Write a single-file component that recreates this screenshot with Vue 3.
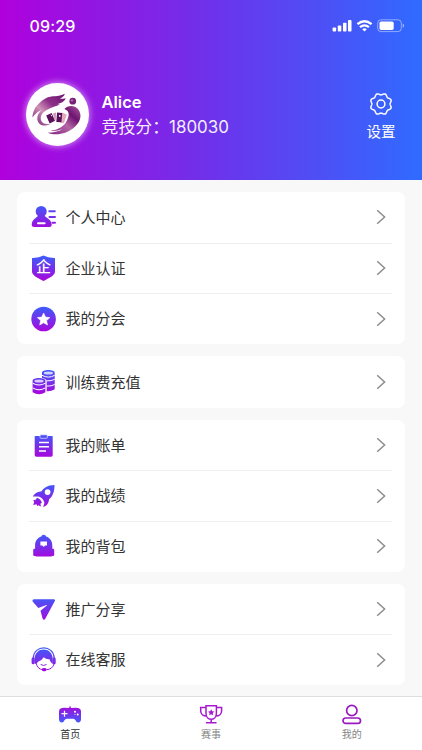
<script setup>
// Each icon is drawn on a 26x26 grid and inherits the vertical gradient fill.
const icons = {
  person: `<circle cx="10.2" cy="7.400" r="5.500"/><path d="M7 11h6.500c0 3 6.800 3 7.200 9.500q0 2.500-2.500 2.500H3.200Q.7 23 .7 20.500C1.200 14 7 14 7 11z"/><path d="M17.500 6.300h6.300a1 1 0 0 1 0 2h-6.300zM18.500 12h5.500a1 1 0 0 1 0 2h-5.500a1 1 0 0 1 0-2zM21.500 17.700h2.500a1 1 0 0 1 0 2h-2.500a1 1 0 0 1 0-2z"/><rect x="6" y="18.300" width="8.600" height="2" rx="1" fill="#fff"/>`,
  shield: `<path d="M12.500 .6Q17 3.200 24 3v13.500c0 4-6 6.500-11.500 9.500C7 23 1 20.500 1 16.500V3Q8 3.200 12.500 .6z"/>`,
  star: `<circle cx="12.600" cy="13" r="12.300"/><path fill="#fff" stroke="#fff" stroke-width=".6" stroke-linejoin="round" d="M12.600 7l1.900 4.100 4.400.5-3.300 3 .9 4.400-3.900-2.200-3.900 2.200.9-4.400-3.300-3 4.400-.5z"/>`,
  coins: `<path d="M11 3.800C11 .2 23.700 .2 23.700 3.800v16.400q-3.300 2.300-8 2V11.300q-1.500-1.800-4.700-2.300z"/><ellipse cx="17.400" cy="4" rx="4.600" ry="1.500" fill="#fff" fill-opacity=".75"/><path d="M11 6.300q6.400 3.600 12.700 0M15.700 11.900q4.700.2 8-1.600M15.700 17.100q4.700.2 8-1.600" fill="none" stroke="#fff" stroke-width="1"/><path d="M1.600 11.800c0-3.600 12.800-3.600 12.800 0v11.400q-6.400 3.900-12.800 0z"/><ellipse cx="8" cy="12" rx="4.600" ry="1.500" fill="#fff" fill-opacity=".75"/><path d="M1.600 14.200q6.400 3.600 12.800 0M1.600 18.900q6.400 3.800 12.800 0" fill="none" stroke="#fff" stroke-width="1"/>`,
  clipboard: `<path d="M4 4h5v1.500h7.300V4H21q.7 0 .7.700V23q0 1.700-1.700 1.700H5.400q-1.700 0-1.700-1.700V4.700Q3.700 4 4 4z"/><rect x="9" y="2.800" width="7.300" height="3.500" rx=".8" stroke="#fff" stroke-width=".6"/><path d="M8 10.500h10M8 14.800h10M8 19h7" stroke="#fff" stroke-width="1.400"/>`,
  rocket: `<path fill-rule="evenodd" d="M23.500 2C16 2 13 5 10.200 8.600 6.500 8.300 3.500 10.500 1.800 13.600l5.300-.2c3.300.6 5.900 3.300 6.300 6.500l-1.200 4.200c4-1.500 5.600-4.500 5.800-7.700C22 13 23.500 8.500 23.500 2zM16.600 6.200a2.900 2.900 0 1 1 0 5.800 2.900 2.900 0 0 1 0-5.800z"/><path d="M6 14.800q3.700 1.200 4.900 4.900l-1.500 1 .6 2.900-2.700-1.400-1.200.9-.5-1.900-3.400.7 1-3-1-1.700 2.500-.5z"/>`,
  bag: `<path d="M10.300 3.600Q10.600 1.800 12.700 1.800t2.400 1.800C19.500 5 21.300 8.500 21.300 12.500V22q0 1.500-1.500 1.500H5.600q-1.500 0-1.500-1.500v-9.500C4.100 8.500 6 5 10.300 3.600z"/><rect x="2.200" y="15.700" width="3.600" height="7.300" rx="1.200"/><rect x="19.600" y="15.700" width="3.600" height="7.300" rx="1.200"/><path fill="#fff" d="M9.400 8.500h6.600v4.100h-2l-1.300 1.500-1.300-1.500h-2z"/>`,
  send: `<path d="M3.200 3.300h19.500q2 0 1 2l-9.300 17.200q-1.500 2.500-2.800 0L9.500 14.800l6.300-5.200q.6-.8-.4-.5L7.300 12 1.800 5.700q-1-2 1.400-2.400z"/>`,
  service: `<path d="M2.300 11C3-2.500 22.500-2.500 23.200 11" fill="none" stroke="url(#rowGrad)" stroke-width="1.200"/><path d="M3.600 12C3.600-.8 21.700-.8 21.700 12v5q-2.400-1.500-3.200-4.800-3.800.2-5.700-2-1.800 3-5.800 4.600-.6 1.900-3 2.200z"/><rect x=".6" y="10.300" width="3.200" height="7" rx="1.600"/><rect x="21.500" y="10.300" width="3.200" height="7" rx="1.600"/><path d="M5 16q1.800 6.500 7 6.700M23 17q-1.500 5.300-7.500 5.700" fill="none" stroke="url(#rowGrad)" stroke-width="1"/><rect x="10.800" y="21" width="4.800" height="3.200" rx="1.600"/><path d="M10 17.700q2.600 1.700 5.200 0" fill="none" stroke="url(#rowGrad)" stroke-width="1" stroke-linecap="round"/>`
}

// Eight-toothed cog outline centred in a 24x24 box.
const cog = Array.from({ length: 144 }, (_, i) => {
  const t = (i / 144) * Math.PI * 2
  const r = 9.95 - 0.85 * Math.cos(8 * t)
  return `${i ? 'L' : 'M'}${(12 + r * Math.cos(t)).toFixed(2)} ${(12 + r * Math.sin(t)).toFixed(2)}`
}).join('') + 'z'

const groups = [
  [
    { icon: 'person', label: '个人中心' },
    { icon: 'shield', label: '企业认证', badge: '企' },
    { icon: 'star', label: '我的分会' }
  ],
  [{ icon: 'coins', label: '训练费充值' }],
  [
    { icon: 'clipboard', label: '我的账单' },
    { icon: 'rocket', label: '我的战绩' },
    { icon: 'bag', label: '我的背包' }
  ],
  [
    { icon: 'send', label: '推广分享' },
    { icon: 'service', label: '在线客服' }
  ]
]
</script>

<template>
  <div class="page">
    <header class="header">
      <div class="status">
        <span class="time">09:29</span>
        <svg class="signals" viewBox="0 0 74 16" fill="#fff">
          <rect x=".6" y="9.500" width="3.500" height="4" rx=".8" />
          <rect x="5.800" y="7.500" width="3.500" height="6" rx=".8" />
          <rect x="11" y="4.800" width="3.500" height="8.700" rx=".8" />
          <rect x="16" y="2" width="3.500" height="11.500" rx=".8" />
          <g fill="none" stroke="#fff" stroke-width="2.300">
            <path d="M25.400 6.200q7.100-6 14.200 0" />
            <path d="M28 9.200q4.500-3.700 9 0" />
          </g>
          <path d="M32.500 13.600l-2.300-2.400q2.300-1.700 4.600 0z" />
          <rect x="45.700" y="1.800" width="23.600" height="11.800" rx="3.300" fill="none" stroke="#fff" stroke-opacity=".45" />
          <rect x="47.500" y="3.500" width="14.200" height="8.400" rx="1.700" />
          <path d="M70.700 5.600q1.500.6 1.500 2.100t-1.500 2.100z" fill-opacity=".5" />
        </svg>
      </div>
      <div class="profile">
        <div class="avatar">
          <svg viewBox="0 0 64 64">
            <defs>
              <linearGradient id="wing" x1="0" y1="1" x2="1" y2="0">
                <stop offset="0" stop-color="#6f1872" />
                <stop offset=".38" stop-color="#d093b8" />
                <stop offset=".62" stop-color="#8d3088" />
                <stop offset="1" stop-color="#6c126d" />
              </linearGradient>
              <linearGradient id="swirl" x1="0" y1="1" x2="1" y2="0">
                <stop offset="0" stop-color="#7d1f7f" />
                <stop offset=".45" stop-color="#b566a4" />
                <stop offset=".7" stop-color="#6d1470" />
                <stop offset="1" stop-color="#a95c9b" />
              </linearGradient>
            </defs>
            <path fill="url(#wing)" d="M6.500 35C7 29 9 24 14 20c5-4.500 9-6.500 15-6.500 4 0 7-1 10.500-2.500-.7 2.500-3 3.800-5 5 2 .3 4-.4 6-.6-1.500 3.500-5 5-9 6.100l3 .2c-3 2-6.500 2.300-10 4-5 2.300-9.500 5.500-9.500 10 0 4.500 4 6.500 9.500 6-6 3.500-12.500.5-13-5-.3-3.500 1.500-6.500 4-9-4 1.500-6.500 4.500-9 7.300z" />
            <path fill="url(#swirl)" d="M39 26.500c3-3.800 10-4.700 14 .2C58 33 54.500 41 48 46 41 51.500 31 54 22 50.500c6 0 11-1 15.500-3.700C33 48.500 29 49 25 48.500c9-1.300 14-5.500 16-9.500 3-5 4-10.500-2-12.500z" />
            <circle cx="47.500" cy="18.500" r="3.400" fill="#782078" />
            <circle cx="46.700" cy="17.600" r="1.200" fill="#b06aa8" />
            <path fill="#e5a9bf" d="M36.500 30l5 2-3 9-4-.8z" />
            <path fill="#591159" d="M20.500 33l5.500-2.600 3.500 8-5.500 2.700zM31.500 30l5.300.4-.8 9.400-5.200-.3z" />
            <path fill="#d395b5" d="M27.500 31l3-1-.3 8-1.400-1z" />
            <path fill="#fff" d="M33.500 32.500H35v1.700h-1.500zM25 31.800l1.500 1.300-.8 1z" />
          </svg>
        </div>
        <div class="who">
          <div class="name">Alice</div>
          <div class="score">竞技分：180030</div>
        </div>
        <div class="settings">
          <svg viewBox="0 0 24 24" fill="none" stroke="#fff" stroke-width="1.500" stroke-linejoin="round">
            <path :d="cog" />
            <circle cx="12" cy="12" r="3.900" />
          </svg>
          <span>设置</span>
        </div>
      </div>
    </header>

    <main class="content">
      <section v-for="(group, g) in groups" :key="g" class="card">
        <div v-for="row in group" :key="row.label" class="row">
          <div class="icon">
            <svg viewBox="0 0 26 26" fill="url(#rowGrad)" v-html="icons[row.icon]"></svg>
            <span v-if="row.badge" class="badge">{{ row.badge }}</span>
          </div>
          <span class="label">{{ row.label }}</span>
          <svg class="arrow" viewBox="0 0 10 16"><path d="M1.200 1.200L8.600 8l-7.400 6.800" fill="none" stroke="#8d8d8d" stroke-width="1.500" /></svg>
        </div>
      </section>
    </main>

    <nav class="tabs">
      <div class="tab active">
        <svg viewBox="0 0 26 22">
          <path fill="url(#padGrad)" d="M12.300 2.500h1.500v1.600Q19 3.500 21 4q3 .5 3 3.800v7.500q0 3-2.800 3.200-1.700.1-2.700-2.200-.7-1.600-2.300-1.600H9.800q-1.600 0-2.300 1.600-1 2.300-2.700 2.200Q2 18.300 2 15.300V7.800Q2 4.500 5 4q2-.5 7.300.1z" />
          <path d="M4.500 9.700h6M7.500 6.700v6" stroke="#fff" stroke-width="1.200" />
          <g fill="#fff"><circle cx="18" cy="7.800" r="1" /><circle cx="20.700" cy="10.500" r="1" /><circle cx="18" cy="10.500" r=".5" /></g>
        </svg>
        <span>首页</span>
      </div>
      <div class="tab">
        <svg viewBox="0 0 26 22" fill="none" stroke="#a719cf" stroke-width="1.500" stroke-linecap="round">
          <path d="M8 1.700h10.400v7.500c0 4.500-3 6-5.200 6S8 13.700 8 9.200zM8 3.500H2.700V7c0 3 2.400 5 5.800 5M18.400 3.500h5.200V7c0 3-2.400 5-5.800 5M13.200 15.200v3.200M8.500 18.800h9.500" />
          <path fill="#a719cf" stroke="none" d="M13.200 5.300l1 2 2.200.3-1.600 1.500.4 2.200-2-1-2 1 .4-2.200L10 7.600l2.200-.3z" />
        </svg>
        <span>赛事</span>
      </div>
      <div class="tab">
        <svg viewBox="0 0 26 22" fill="none" stroke="#991bc0" stroke-width="1.700">
          <circle cx="12.800" cy="6.500" r="5.200" />
          <rect x="4" y="14" width="17.500" height="5.400" rx="2.700" />
        </svg>
        <span>我的</span>
      </div>
    </nav>

    <svg class="defs" width="0" height="0">
      <defs>
        <linearGradient id="rowGrad" gradientUnits="userSpaceOnUse" x1="0" y1="1" x2="0" y2="25">
          <stop offset="0" stop-color="#3d5cfa" />
          <stop offset="1" stop-color="#a906dc" />
        </linearGradient>
        <linearGradient id="padGrad" gradientUnits="userSpaceOnUse" x1="0" y1="3" x2="0" y2="18">
          <stop offset="0" stop-color="#a40cdc" />
          <stop offset="1" stop-color="#4558fa" />
        </linearGradient>
      </defs>
    </svg>
  </div>
</template>

<style>
body {
  margin: 0;
  overflow: hidden;
}
</style>

<style scoped>
.page {
  position: relative;
  display: flex;
  flex-direction: column;
  width: 422px;
  height: 750px;
  background: #f8f8f8;
  font-family: Inter, "Noto Sans CJK SC", sans-serif;
  color: #333;
}
.header {
  box-sizing: border-box;
  height: 180px;
  flex: none;
  color: #fff;
  background: linear-gradient(90deg, #b000dc 0%, #7030ea 48%, #2f6bff 100%);
}
.status {
  display: flex;
  justify-content: space-between;
  align-items: center;
  height: 52px;
  padding: 0 16px 0 29.500px;
}
.time {
  font-size: 16px;
  font-weight: 500;
  letter-spacing: 0.15px;
}
.signals {
  width: 74px;
  height: 16px;
}
.profile {
  display: flex;
  align-items: center;
  height: 124px;
  padding: 0 25px 0 26px;
}
.avatar {
  width: 63px;
  height: 63px;
  border-radius: 50%;
  background: #fff;
  box-shadow: 0 0 6px 1px rgba(255, 255, 255, 0.5);
}
.avatar svg {
  display: block;
  width: 63px;
  height: 63px;
}
.who {
  flex: 1;
  margin-left: 12.500px;
  padding-top: 1px;
}
.name {
  font-size: 16.500px;
  font-weight: 600;
  line-height: 24px;
}
.score {
  font-size: 16.900px;
  line-height: 26px;
  opacity: 0.92;
}
.settings {
  display: flex;
  flex-direction: column;
  align-items: center;
  gap: 5px;
  width: 32px;
  padding-top: 6px;
  font-size: 14.500px;
  line-height: 22px;
  white-space: nowrap;
}
.settings svg {
  width: 24px;
  height: 24px;
}
.content {
  display: flex;
  flex-direction: column;
  gap: 12px;
  padding: 12px 17px 0;
  flex: 1;
}
.card {
  border-radius: 8px;
  background: #fff;
}
.row {
  position: relative;
  display: flex;
  align-items: center;
  height: 50.700px;
  padding: 0 19px 0 14px;
}
.row:only-child {
  height: 51.500px;
}
.row + .row::before {
  content: "";
  position: absolute;
  top: 0;
  left: 12px;
  right: 13px;
  height: 1px;
  background: #eee;
}
.icon {
  position: relative;
  width: 26px;
  height: 26px;
}
.icon svg {
  display: block;
  width: 26px;
  height: 26px;
}
.badge {
  position: absolute;
  inset: 0 1px 0 0;
  color: #fff;
  font-size: 15px;
  font-weight: 500;
  line-height: 24px;
  text-align: center;
}
.label {
  flex: 1;
  margin-left: 8.500px;
  padding-bottom: 1.500px;
  font-size: 15px;
}
.arrow {
  width: 10px;
  height: 16px;
}
.tabs {
  box-sizing: border-box;
  display: flex;
  height: 54px;
  border-top: 1px solid #dedede;
  background: #fff;
}
.tab {
  flex: 1;
  display: flex;
  flex-direction: column;
  align-items: center;
  padding-top: 7px;
  font-size: 10px;
  line-height: 16px;
  color: #858585;
}
.tab svg {
  width: 26px;
  height: 22px;
}
.active {
  color: #333;
}
.defs {
  position: absolute;
}
</style>
